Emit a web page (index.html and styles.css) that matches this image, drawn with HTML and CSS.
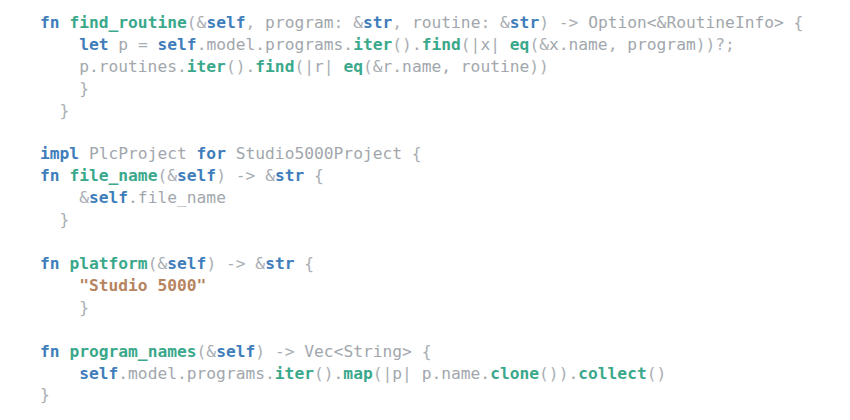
FILE: index.html
```html
<!DOCTYPE html>
<html>
<head>
<meta charset="utf-8">
<link rel="stylesheet" href="styles.css">
</head>
<body>
<pre class="code"><span class="kw">fn</span> <span class="fn">find_routine</span><span class="p">(</span><span class="p">&amp;</span><span class="kw">self</span><span class="p">,</span> <span class="id">program</span><span class="p">:</span> <span class="p">&amp;</span><span class="kw">str</span><span class="p">,</span> <span class="id">routine</span><span class="p">:</span> <span class="p">&amp;</span><span class="kw">str</span><span class="p">)</span> <span class="p">-&gt;</span> <span class="id">Option&lt;&amp;RoutineInfo&gt;</span> <span class="p">{</span>
    <span class="kw">let</span> <span class="id">p</span> <span class="p">=</span> <span class="kw">self</span><span class="id">.model.programs.</span><span class="fn">iter</span><span class="p">()</span><span class="id">.</span><span class="fn">find</span><span class="p">(|</span><span class="id">x</span><span class="p">|</span> <span class="fn">eq</span><span class="p">(&amp;</span><span class="id">x.name, program</span><span class="p">))?;</span>
    <span class="id">p.routines.</span><span class="fn">iter</span><span class="p">()</span><span class="id">.</span><span class="fn">find</span><span class="p">(|</span><span class="id">r</span><span class="p">|</span> <span class="fn">eq</span><span class="p">(&amp;</span><span class="id">r.name, routine</span><span class="p">))</span>
    <span class="p">}</span>
  <span class="p">}</span>

<span class="kw">impl</span> <span class="id">PlcProject</span> <span class="kw">for</span> <span class="id">Studio5000Project</span> <span class="p">{</span>
<span class="kw">fn</span> <span class="fn">file_name</span><span class="p">(&amp;</span><span class="kw">self</span><span class="p">)</span> <span class="p">-&gt;</span> <span class="p">&amp;</span><span class="kw">str</span> <span class="p">{</span>
    <span class="p">&amp;</span><span class="kw">self</span><span class="id">.file_name</span>
  <span class="p">}</span>

<span class="kw">fn</span> <span class="fn">platform</span><span class="p">(&amp;</span><span class="kw">self</span><span class="p">)</span> <span class="p">-&gt;</span> <span class="p">&amp;</span><span class="kw">str</span> <span class="p">{</span>
    <span class="str">"Studio 5000"</span>
    <span class="p">}</span>

<span class="kw">fn</span> <span class="fn">program_names</span><span class="p">(&amp;</span><span class="kw">self</span><span class="p">)</span> <span class="p">-&gt;</span> <span class="id">Vec&lt;String&gt;</span> <span class="p">{</span>
    <span class="kw">self</span><span class="id">.model.programs.</span><span class="fn">iter</span><span class="p">()</span><span class="id">.</span><span class="fn">map</span><span class="p">(|</span><span class="id">p</span><span class="p">|</span> <span class="id">p.name.</span><span class="fn">clone</span><span class="p">())</span><span class="id">.</span><span class="fn">collect</span><span class="p">()</span>
<span class="p">}</span></pre>
</body>
</html>
```
FILE: styles.css
```css
html, body {
  margin: 0;
  padding: 0;
  background: #ffffff;
}
.code {
  margin: 0;
  padding: 12px 0 0 40px;
  font-family: "DejaVu Sans Mono", "Liberation Mono", monospace;
  font-size: 16.25px;
  line-height: 21.9px;
  color: #a3a8ae;
}
.kw {
  color: #3f7dbb;
  font-weight: bold;
}
.fn {
  color: #3aa88b;
  font-weight: bold;
}
.id {
  color: #a2a7ad;
}
.p {
  color: #a9aeb3;
}
.str {
  color: #b6845f;
  font-weight: bold;
}
```
